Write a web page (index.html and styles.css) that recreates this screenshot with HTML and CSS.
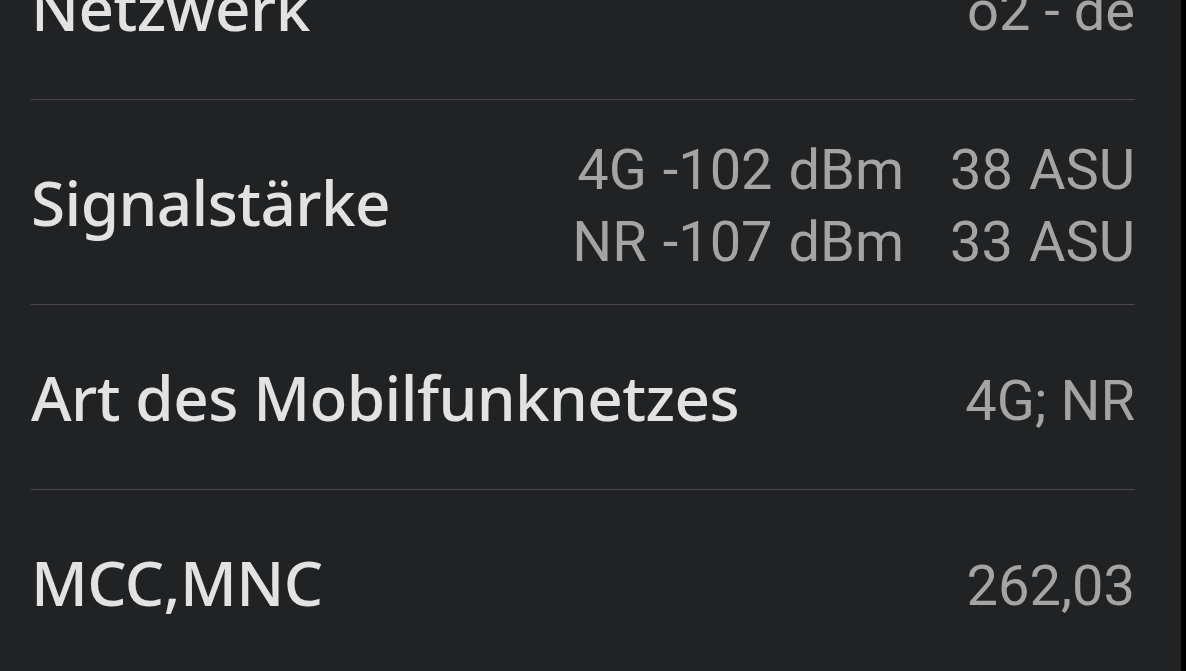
FILE: index.html
```html
<!DOCTYPE html>
<html lang="de">
<head>
<meta charset="utf-8">
<title>Netzwerk</title>
<link rel="stylesheet" href="styles.css">
</head>
<body>
<div class="screen">
  <ul class="list">
    <li class="row">
      <span class="label">Netzwerk</span>
      <span class="value">o2 - de</span>
    </li>
    <li class="row">
      <span class="label">Signalstärke</span>
      <span class="value grid">
        <span>4G -102 dBm</span><span>38 ASU</span>
        <span>NR -107 dBm</span><span>33 ASU</span>
      </span>
    </li>
    <li class="row">
      <span class="label">Art des Mobilfunknetzes</span>
      <span class="value">4G; NR</span>
    </li>
    <li class="row last">
      <span class="label">MCC,MNC</span>
      <span class="value">262,03</span>
    </li>
  </ul>
</div>
</body>
</html>
```
FILE: styles.css
```css
html, body {
  margin: 0;
  padding: 0;
  background: #000;
  height: 100%;
  overflow: hidden;
}
.screen {
  width: 1181px;
  height: 671px;
  background: #212224;
  overflow: hidden;
}
.list {
  list-style: none;
  margin: -85px 0 0 0;
  padding: 0 46px 0 31px;
}
.row {
  display: flex;
  justify-content: space-between;
  align-items: center;
  min-height: 124px;
  padding: 30px 0;
  border-bottom: 1px solid #474749;
}
.row.last {
  border-bottom: none;
}
.label {
  font-family: "Noto Sans", sans-serif;
  font-weight: 500;
  font-size: 62px;
  letter-spacing: -0.6px;
  color: #e2e2e2;
  line-height: 72px;
}
.value {
  font-family: Roboto, sans-serif;
  font-size: 56px;
  color: #a4a4a4;
  line-height: 72px;
  text-align: right;
  padding-top: 4px;
  margin-bottom: -4px;
}
.value.grid {
  display: grid;
  grid-template-columns: auto auto;
  column-gap: 46px;
  justify-items: end;
  word-spacing: 2px;
}
```
